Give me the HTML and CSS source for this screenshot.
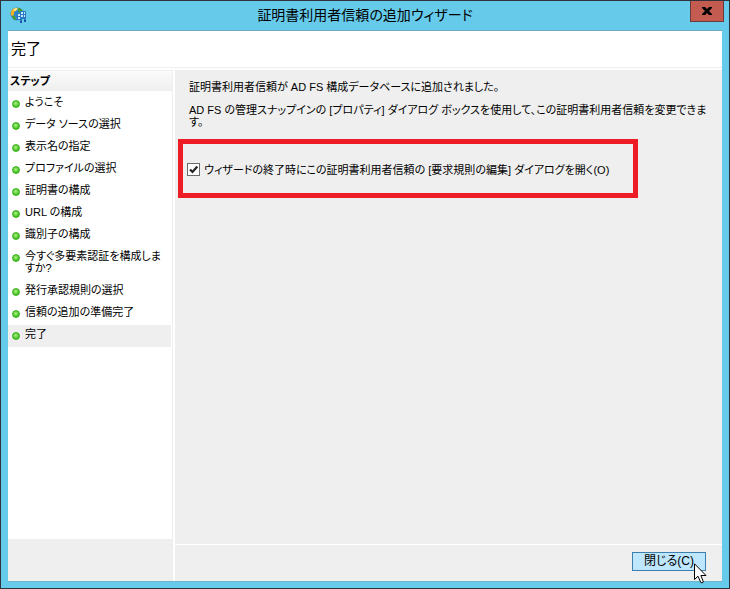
FILE: index.html
```html
<!DOCTYPE html>
<html lang="ja">
<head>
    <meta charset="UTF-8">
    <meta name="viewport" content="width=device-width, initial-scale=1.0">
    <title>証明書利用者信頼の追加ウィザード</title>
    <link rel="stylesheet" href="styles.css">
</head>
<body>
    <div class="window">
        <header class="titlebar">
            <svg class="app-icon" viewBox="0 0 17 17" aria-hidden="true">
                <circle cx="7" cy="7" r="6.5" fill="#2f86c9"/>
                <path d="M1 8 C0 3 4 0 8 1 L6 4 L4 5 L4 8 L2 9 Z" fill="#f2b01c"/>
                <path d="M3 3 L6 1 L8 2 L5 4 Z" fill="#fff0a0"/>
                <path d="M8 1 C11 1 13 3 13 5 L10 6 L8 4 Z M2 9 L5 9 L6 13 C4 13 2 11 2 9 Z" fill="#4b9b2f"/>
                <path d="M7 6 H10 V4 H16 V14 H14 V12 H12 V15 H10 V13 H7 Z" fill="#2878c8"/>
                <path d="M8 7 h2 v2 h-2 z M11 5 h2 v2 h-2 z M14 5 h1 v2 h-1 z M11 8 h2 v2 h-2 z M14 8 h1 v2 h-1 z M8 10 h2 v2 h-2 z" fill="#c9ecff"/>
                <path d="M10 14 h2 v2 h-2 z M14 13 h2 v2 h-2 z" fill="#1b55a0"/>
            </svg>
            <h1 class="window-title">証明書利用者信頼の追加ウィザード</h1>
            <button type="button" class="close-button" aria-label="ウィンドウを閉じる">
                <svg viewBox="0 0 10 8" aria-hidden="true">
                    <path d="M0 0 H3 L5 2 L7 0 H10 V1 L7 4 L10 7 V8 H7 L5 6 L3 8 H0 V7 L3 4 L0 1 Z"/>
                </svg>
            </button>
        </header>

        <div class="client">
            <h2 class="page-title">完了</h2>

            <div class="wizard">
                <nav class="sidebar">
                    <h3 class="steps-title">ステップ</h3>
                    <ol class="steps">
                        <li class="step">ようこそ</li>
                        <li class="step">データ ソースの選択</li>
                        <li class="step">表示名の指定</li>
                        <li class="step">プロファイルの選択</li>
                        <li class="step">証明書の構成</li>
                        <li class="step">URL の構成</li>
                        <li class="step">識別子の構成</li>
                        <li class="step">今すぐ多要素認証を構成しますか?</li>
                        <li class="step">発行承認規則の選択</li>
                        <li class="step">信頼の追加の準備完了</li>
                        <li class="step current" aria-current="step">完了</li>
                    </ol>
                </nav>

                <div class="main">
                    <div class="content">
                        <p>証明書利用者信頼が AD FS 構成データベースに追加されました。</p>
                        <p>AD FS の管理スナップインの [プロパティ] ダイアログ ボックスを使用して、この証明書利用者信頼を変更できます。</p>
                        <div class="highlight">
                            <input type="checkbox" id="openRules" checked>
                            <label for="openRules">ウィザードの終了時にこの証明書利用者信頼の [要求規則の編集] ダイアログを開く(O)</label>
                        </div>
                    </div>
                    <footer class="footer">
                        <button type="button" class="finish-button">閉じる(C)</button>
                        <svg class="cursor" viewBox="0 0 13 21" aria-hidden="true">
                            <path d="M0.5 0.8 V16.5 L4 13.2 L6.8 19.5 Q8 20.5 9.4 19 L6.9 12.5 H12 Z"/>
                        </svg>
                    </footer>
                </div>
            </div>
        </div>
    </div>
</body>
</html>
```
FILE: styles.css
```css
*, *::before {
    box-sizing: border-box;
}

body {
    margin: 0;
    font-family: "Liberation Sans", "Noto Sans CJK JP", sans-serif;
    font-feature-settings: "palt";
    font-size: 11px;
    line-height: 12px;
    color: #000;
}

h1, h2, h3, p, ol {
    margin: 0;
    padding: 0;
}

button {
    font: inherit;
    font-feature-settings: inherit;
    color: inherit;
    padding: 0;
}

.window {
    display: flex;
    flex-direction: column;
    min-height: 100vh;
    padding: 0 7px 6px;
    border: 1px solid #30343a;
    background-color: #66caea;
}

/* タイトルバー */
.titlebar {
    display: flex;
    align-items: flex-start;
    height: 29px;
}

.app-icon {
    width: 17px;
    height: 17px;
    margin: 6px 13px 0 2px;
}

.window-title {
    flex: 1;
    font-size: 14px;
    font-weight: normal;
    line-height: 29px;
    text-align: center;
}

.close-button {
    display: flex;
    align-items: center;
    justify-content: center;
    width: 34px;
    height: 21px;
    margin-right: -2px;
    border: 1px solid #6a3a3c;
    border-top: none;
    background-color: #c45b50;
}

.close-button svg {
    width: 10px;
    height: 8px;
}

.client {
    flex: 1;
    display: flex;
    flex-direction: column;
    border-top: 1px solid #6fa9c4;
    border-bottom: 1px solid #6fb4cf;
    background-color: #fff;
}

.page-title {
    padding: 0 3px;
    border-bottom: 1px solid #efefef;
    font-size: 15px;
    font-weight: normal;
    line-height: 36px;
}

.wizard {
    flex: 1;
    display: flex;
    gap: 2px;
    padding-top: 2px;
}

/* ステップ一覧 */
.sidebar {
    display: flex;
    flex-direction: column;
    width: 165px;
    padding-bottom: 42px;
    border-top: 1px solid #efefef;
    border-right: 1px solid #efefef;
    background-color: #efefef;
}

.steps-title {
    padding: 0 2px;
    background: linear-gradient(#fbfbfb, #efefef);
    font-size: 11px;
    line-height: 20px;
}

.steps {
    flex: 1;
    padding: 2px 1px 0 0;
    background-color: #fff;
    list-style: none;
}

.step {
    display: flex;
    align-items: flex-start;
    gap: 5px;
    padding: 3px 4px 7px;
}

.step::before {
    content: "";
    flex: none;
    width: 8px;
    height: 8px;
    margin-top: 4px;
    border: 1px solid #3fae22;
    border-radius: 50%;
    background: radial-gradient(circle at 45% 40%, #b4f08c, #3fc51c 65%);
}

.current {
    background-color: #efefef;
}

/* 本文 */
.main {
    flex: 1;
    display: flex;
    flex-direction: column;
    background-color: #efefef;
}

.content {
    flex: 1;
    padding: 11px 14px;
}

.content p {
    margin-bottom: 11px;
}

.highlight {
    display: flex;
    align-items: center;
    gap: 4px;
    width: 460px;
    max-width: 100%;
    height: 59px;
    margin-left: -11px;
    padding: 2px 4px 0;
    border: 5px solid #ee1c24;
}

.highlight input {
    appearance: none;
    flex: none;
    width: 13px;
    height: 13px;
    margin: 0;
    border: 1px solid #6b6b6b;
    background-color: #fff;
}

.highlight input:checked {
    background-image: url("data:image/svg+xml,%3Csvg xmlns='http://www.w3.org/2000/svg' viewBox='0 0 11 11'%3E%3Cpath d='M2 5.5 L4.5 8 L9.3 2.5' fill='none' stroke='%23222' stroke-width='2.2'/%3E%3C/svg%3E");
}

.footer {
    position: relative;
    display: flex;
    justify-content: flex-end;
    padding: 7px 16px 10px;
    border-top: 1px solid #fff;
}

.finish-button {
    width: 74px;
    height: 19px;
    border: 1px solid #3c7fb1;
    background-color: #bee6fd;
    font-size: 12px;
    line-height: 17px;
}

.cursor {
    position: absolute;
    right: 15px;
    bottom: -3px;
    width: 13px;
    height: 21px;
    fill: #fff;
    stroke: #000;
}
```
